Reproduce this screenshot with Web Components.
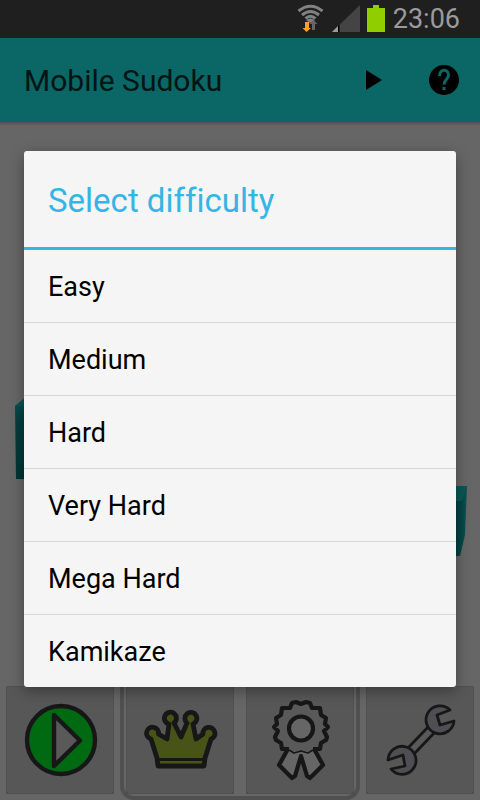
<!DOCTYPE html>
<html lang="en">
<head>
<meta charset="utf-8">
<meta name="viewport" content="width=device-width, initial-scale=1">
<title>Mobile Sudoku</title>
<style>
html, body { margin: 0; }
body { background: #666; font-family: Roboto, "Noto Sans", sans-serif; font-variant-ligatures: none; color: #000; }
</style>
</head>
<body>
<sudoku-app></sudoku-app>

<template id="t-app">
<style>
:host { display: flex; flex-direction: column; min-height: 100vh; position: relative; background: #666; }
main { flex: 1; display: grid; background: linear-gradient(#505050, #666 4px); }
</style>
<status-bar></status-bar>
<app-bar>Mobile Sudoku</app-bar>
<main><cube-art></cube-art></main>
<tool-dock>
  <tool-tile label="Play"><svg viewBox="0 0 108 108"><g stroke="#171717" stroke-width="4.4" stroke-linejoin="round"><circle cx="55" cy="54" r="34" fill="#006a12"/><path d="M48 29V80L74 54.500Z" fill="#595959"/></g></svg></tool-tile>
  <tool-tile label="High scores"><svg viewBox="0 0 108 108"><g fill="#485417" stroke="#171717" stroke-width="4.8" stroke-linejoin="round"><path d="M32 80 31 72 25 53A6 6 0 1 1 32.500 48L41 53 43 38A6 6 0 1 1 48 37L55 51 61 37A6 6 0 1 1 67 38L70 53 77 48A6 6 0 1 1 85 53L79 72 78 80Z"/><path d="M32 73.500H79" stroke-width="3"/></g></svg></tool-tile>
  <tool-tile label="Achievements"><svg viewBox="0 0 108 108"><g fill="#666" stroke="#171717" stroke-width="4.2" stroke-linejoin="round"><path d="M43 61 33 79 46 92 49 90 55 70 61 90 64 92 77 79 67 61Z"/><path d="M55 18 60 16 64 17 66 22 74 22 75 29 80 32 79 38 82 41 78 45 81 51 80 54 75 57 73 64 66 64 64 66 60 65 55 66 50 65 46 66 44 64 36 64 35 57 30 54 29 51 32 45 28 41 31 38 30 32 35 29 36 22 44 22 46 17 50 16Z" fill="#595959" stroke="none"/><path d="M43 63H36L35 57 30 54 29 51 32 45 28 41 31 38 30 32 35 29 36 22 44 22 46 17 50 16 55 18 60 16 64 17 66 22 74 22 75 29 80 32 79 38 82 41 78 45 81 51 80 54 75 57 74 63H67" fill="none"/><path d="M43 64 48 67 55 65 62 67 67 64" fill="none" stroke-width="1.500"/><circle cx="55" cy="42.500" r="12"/></g></svg></tool-tile>
  <tool-tile label="Settings"><svg viewBox="0 0 108 108"><g fill="#4e4e54" stroke="#171717" stroke-width="2.800" stroke-linejoin="round"><path d="M42 62 64 39 70 45 48 68Z" fill="#595959"/><path d="M84 24A14 14 0 1 0 88 35L74 39 71 29Z"/><path d="M25 83A14 14 0 1 0 22 74L37 69 39 80Z"/></g></svg></tool-tile>
</tool-dock>
<modal-layer><difficulty-dialog heading="Select difficulty">
  <difficulty-option>Easy</difficulty-option>
  <difficulty-option>Medium</difficulty-option>
  <difficulty-option>Hard</difficulty-option>
  <difficulty-option>Very Hard</difficulty-option>
  <difficulty-option>Mega Hard</difficulty-option>
  <difficulty-option>Kamikaze</difficulty-option>
</difficulty-dialog></modal-layer>
</template>

<template id="t-status">
<style>
:host { display: flex; justify-content: flex-end; align-items: center; height: 38px; padding-right: 20px; background: #1f1f1f; color: #9b9b9b; font-size: 27px; line-height: 38px; }
svg { width: 94px; height: 38px; flex: none; margin-right: 7px; }
</style>
<svg viewBox="292 0 94 38" role="img" aria-label="Wi-Fi, signal, battery">
  <g fill="none" stroke="#818181" stroke-width="3"><path d="M298.500 11Q310.500 1.500 322.500 11"/><path d="M302 15Q310.500 8 319 15"/><path d="M305.500 18.500Q310.500 14 315.500 18.500"/></g>
  <path d="M306 20Q310.500 17 315 20L310 23Z" fill="#818181"/>
  <path d="M305 22h4v6h2l-4.500 4-4 -4h2.500Z" fill="#ff9c2e"/>
  <path d="M312 30v-6h-2.500l4-4 4 4h-2.500v6Z" fill="#666"/>
  <path d="M332 32 360 5V32Z" fill="#444"/><path d="M332 32 338 26V32Z" fill="#9b9b9b"/><path d="M338 26V32h1.500V24.500Z" fill="#000"/>
  <path d="M367 8h6V5h6v3h6v24h-18Z" fill="#91ce00"/>
</svg>
<time>23:06</time>
</template>

<template id="t-bar">
<style>
:host { display: flex; align-items: center; height: 84px; padding: 0 12px 0 24px; background: #0b6666; color: #051414; }
h1 { flex: 1; margin: 0; padding-top: 2px; font-size: 30px; line-height: 36px; font-weight: 400; }
button { width: 48px; height: 48px; margin-left: 22px; padding: 0; border: 0; background: none; display: grid; place-items: center; }
svg { width: 32px; height: 32px; display: block; }
</style>
<h1><slot></slot></h1>
<button aria-label="Start"><svg viewBox="0 0 32 32"><path d="M8 6V26L24 16Z"/></svg></button>
<button aria-label="Help"><svg viewBox="0 0 32 32"><circle cx="16" cy="16" r="15"/><path d="M11.500 12C11.500 4.500 20.500 4.500 20.500 11C20.500 15 16 15.500 16 20.500" fill="none" stroke="#0b6666" stroke-width="3"/><path d="M14.500 23h3v3h-3Z" fill="#0b6666"/></svg></button>
</template>

<template id="t-art">
<style>
:host { display: grid; align-items: end; }
svg { width: 100%; height: auto; display: block; }
</style>
<svg viewBox="0 0 480 558" aria-hidden="true">
  <defs>
    <linearGradient id="a" x2="0" y2="1"><stop stop-color="#075454"/><stop offset=".3" stop-color="#043e3e"/><stop offset="1" stop-color="#033434"/></linearGradient>
    <linearGradient id="b" x1="420" x2="467" y1="0" y2="0" gradientUnits="userSpaceOnUse"><stop offset=".7" stop-color="#023838"/><stop offset=".9" stop-color="#064747"/><stop offset="1" stop-color="#0b5454"/></linearGradient>
  </defs>
  <path d="M15 284 26 275H70V358L16 357Z" fill="url(#a)"/><path d="M15 284 26 275H70V284Z" fill="#075454"/>
  <path d="M420 364H467L465 413 460 434 420 435Z" fill="url(#b)"/><path d="M420 364H467L462 379H420Z" fill="#0a5656"/>
</svg>
</template>

<template id="t-dock">
<style>
:host { display: grid; grid-template-columns: repeat(4, 1fr); gap: 12px; padding: 6px; position: relative; z-index: 0; }
:host::before { content: ""; position: absolute; z-index: -1; box-sizing: border-box; inset: 0 25% 0 25%; border: 4px solid #505050; border-top: 0; border-radius: 0 0 14px 14px; }
</style>
<slot></slot>
</template>

<template id="t-tile">
<style>
:host { display: block; }
button { display: block; width: 100%; aspect-ratio: 1; padding: 0; border: 0; border-radius: 2px; background: #575757; box-shadow: inset 0 0 0 1px #515151, inset 0 -1px #333; }
::slotted(svg) { display: block; width: 100%; height: 100%; }
</style>
<button><slot></slot></button>
</template>

<template id="t-modal">
<style>
:host { position: absolute; inset: 38px 0 0; display: grid; align-items: center; padding: 0 24px 1px; z-index: 1; }
</style>
<slot></slot>
</template>

<template id="t-dialog">
<style>
:host { display: block; background: #f5f5f5; border-radius: 3px; box-shadow: 0 4px 14px rgba(0,0,0,.35); overflow: hidden; }
h2 { margin: 0; padding: 30px 24px 26px; border-bottom: 3px solid #33b5e5; color: #33b5e5; font-size: 33px; line-height: 40px; font-weight: 400; }
</style>
<section role="dialog" aria-modal="true" aria-labelledby="h">
  <h2 id="h"></h2>
  <slot></slot>
</section>
</template>

<template id="t-option">
<style>
:host { display: block; border-bottom: 1px solid #d8d8d8; }
:host(:last-of-type) { border-bottom: 0; }
button { display: block; width: 100%; padding: 21px 24px 19px; border: 0; background: none; color: #000; font: inherit; font-size: 27px; line-height: 32px; text-align: left; }
</style>
<button><slot></slot></button>
</template>

<script>
const define = (name, id, setup) => customElements.define(name, class extends HTMLElement {
  constructor() {
    super();
    this.attachShadow({ mode: "open" }).append(document.getElementById(id).content.cloneNode(true));
  }
  connectedCallback() {
    if (setup) setup(this, this.shadowRoot);
  }
});
define("status-bar", "t-status");
define("app-bar", "t-bar");
define("cube-art", "t-art");
define("tool-dock", "t-dock");
define("tool-tile", "t-tile", (host, root) => root.querySelector("button").setAttribute("aria-label", host.getAttribute("label")));
define("modal-layer", "t-modal");
define("difficulty-dialog", "t-dialog", (host, root) => { root.querySelector("h2").textContent = host.getAttribute("heading"); });
define("difficulty-option", "t-option");
define("sudoku-app", "t-app");
</script>
</body>
</html>
